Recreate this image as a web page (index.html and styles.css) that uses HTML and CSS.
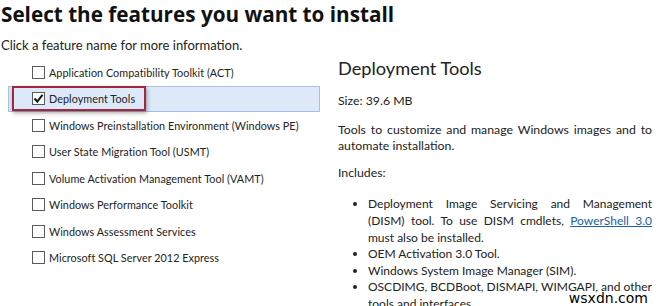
FILE: index.html
```html
<!DOCTYPE html>
<html lang="en">
<head>
  <meta charset="UTF-8" />
  <title>Select the features you want to install</title>
  <link rel="stylesheet" href="styles.css">
</head>
<body>
  <h1 class="page-title">Select the features you want to install</h1>
  <p class="hint">Click a feature name for more information.</p>

  <div class="main">
    <!-- Feature list -->
    <ul class="features">
      <li class="feature"><span class="box"></span>Application Compatibility Toolkit (ACT)</li>
      <li class="feature selected">
        <span class="marked"><span class="box checked">
          <svg width="11" height="11" viewBox="0 0 11 11"><path d="M1.5 5.5 L4.3 8.5 L9.5 1.8" fill="none" stroke="#111" stroke-width="2"/></svg>
        </span>Deployment Tools</span>
      </li>
      <li class="feature"><span class="box"></span>Windows Preinstallation Environment (Windows PE)</li>
      <li class="feature"><span class="box"></span>User State Migration Tool (USMT)</li>
      <li class="feature"><span class="box"></span>Volume Activation Management Tool (VAMT)</li>
      <li class="feature"><span class="box"></span>Windows Performance Toolkit</li>
      <li class="feature"><span class="box"></span>Windows Assessment Services</li>
      <li class="feature"><span class="box"></span>Microsoft SQL Server 2012 Express</li>
    </ul>

    <!-- Details -->
    <div class="details">
      <h2 class="details-title">Deployment Tools</h2>
      <p class="size">Size: 39.6 MB</p>
      <p class="desc">Tools to customize and manage Windows images and to automate installation.</p>
      <p class="includes">Includes:</p>
      <ul class="bullets">
        <li>Deployment Image Servicing and Management (DISM) tool. To use DISM cmdlets, <a href="#">PowerShell 3.0</a> must also be installed.</li>
        <li>OEM Activation 3.0 Tool.</li>
        <li>Windows System Image Manager (SIM).</li>
        <li>OSCDIMG, BCDBoot, DISMAPI, WIMGAPI, and other tools and interfaces.</li>
      </ul>
    </div>
  </div>

  <div class="watermark">wsxdn.com</div>
</body>
</html>
```

FILE: styles.css
```css
body {
  margin: 0;
  font-family: 'Lato', sans-serif;
  color: #222;
  background: #fff;
  width: 660px;
  height: 306px;
  overflow: hidden;
  position: relative;
}

.page-title {
  margin: 0;
  padding: 1px 0 0 1px;
  font-family: 'Open Sans', sans-serif;
  font-size: 20.7px;
  font-weight: 700;
  line-height: 26px;
  color: #111;
}

.hint {
  margin: 10px 0 0 1px;
  font-size: 13px;
  line-height: 16px;
}

.main {
  display: flex;
  margin-top: 6px;
}

.features {
  list-style: none;
  margin: 0;
  padding: 0 0 0 8px;
  width: 312px;
}

.feature {
  display: flex;
  align-items: center;
  height: 26.5px;
  padding-left: 23px;
  font-size: 10.8px;
  letter-spacing: 0.05px;
  white-space: nowrap;
  border: 1px solid transparent;
  box-sizing: border-box;
}

.feature.selected {
  background: #dde9f8;
  border-color: #a6c1e2;
  padding-left: 3px;
}

.marked {
  display: flex;
  align-items: center;
  height: 25px;
  width: 134px;
  padding-left: 18px;
  box-sizing: border-box;
  border: 2px solid #a3283c;
  box-shadow: 1px 2px 4px rgba(0, 0, 0, 0.35);
  background: #dde9f8;
}

.box {
  width: 11px;
  height: 11px;
  border: 1px solid #5a5a5a;
  background: #fff;
  margin-right: 4px;
  flex-shrink: 0;
  display: flex;
  align-items: center;
  justify-content: center;
}

.details {
  padding-left: 18px;
  width: 314px;
  margin-top: -3px;
}

.details-title {
  margin: 0;
  font-size: 18.2px;
  font-weight: 400;
  line-height: 24px;
}

.size,
.desc,
.includes {
  margin: 0;
  font-size: 12.3px;
  line-height: 16.6px;
}

.size {
  margin-top: 13px;
}

.desc {
  margin-top: 12px;
  text-align: justify;
}

.includes {
  margin-top: 10px;
}

.bullets {
  margin: 15px 0 0;
  padding-left: 30px;
  font-size: 12px;
  line-height: 16.6px;
  text-align: justify;
}

.bullets a {
  color: #1b61a6;
}

.watermark {
  position: absolute;
  right: 12px;
  bottom: 0;
  font-family: 'DejaVu Sans', sans-serif;
  font-size: 14px;
  color: #000;
}
```
